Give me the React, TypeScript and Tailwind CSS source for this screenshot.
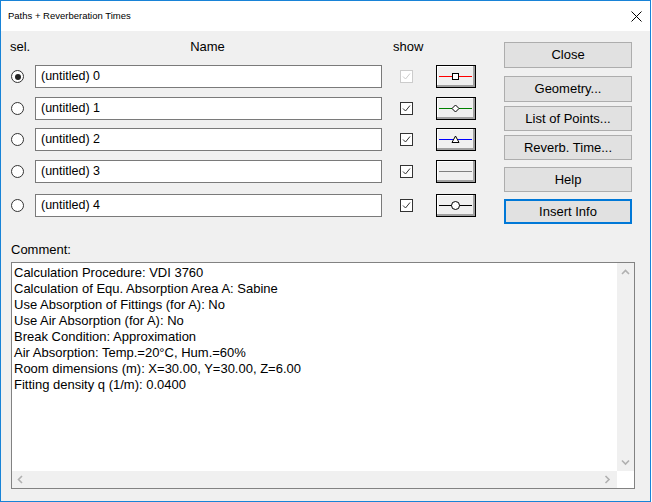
import React from 'react';

// rows of the path table; top margin keeps the uneven spacing of the dialog
const PATHS = [
    { name: '(untitled) 0', mt: 'mt-[10px]', color: '#ff0000', marker: 'square', enabled: false },
    { name: '(untitled) 1', mt: 'mt-[9px]', color: '#008000', marker: 'diamond', enabled: true },
    { name: '(untitled) 2', mt: 'mt-[8px]', color: '#0000ff', marker: 'triangle', enabled: true },
    { name: '(untitled) 3', mt: 'mt-[9px]', color: '#808080', marker: 'none', enabled: true },
    { name: '(untitled) 4', mt: 'mt-[11px]', color: '#000000', marker: 'circle', enabled: true },
];

const BUTTONS = [
    { label: 'Close', cls: 'mt-0 h-[26px]' },
    { label: 'Geometry...', cls: 'mt-[8px] h-[26px]' },
    { label: 'List of Points...', cls: 'mt-[4px] h-[25px]' },
    { label: 'Reverb. Time...', cls: 'mt-[4px] h-[25px]' },
    { label: 'Help', cls: 'mt-[7px] h-[25px]' },
];

const COMMENT = [
    'Calculation Procedure: VDI 3760',
    'Calculation of Equ. Absorption Area A: Sabine',
    'Use Absorption of Fittings (for A): No',
    'Use Air Absorption (for A): No',
    'Break Condition: Approximation',
    'Air Absorption: Temp.=20°C, Hum.=60%',
    'Room dimensions (m): X=30.00, Y=30.00, Z=6.00',
    'Fitting density q (1/m): 0.0400',
];

function Radio({ checked }: { checked: boolean }) {
    return (
        <div className="w-[13px] h-[13px] rounded-full border border-[#333] bg-white flex items-center justify-center">
            {checked && <div className="w-[6px] h-[6px] rounded-full bg-[#222]" />}
        </div>
    );
}

function Check({ enabled }: { enabled: boolean }) {
    const c = enabled ? '#333' : '#cccccc';
    return (
        <svg width="13" height="13" viewBox="0 0 13 13">
            <rect x="0.5" y="0.5" width="12" height="12" fill="#fff" stroke={c} />
            <polyline points="3,6.5 5.5,9 10,3.5" fill="none" stroke={c} strokeWidth="1" />
        </svg>
    );
}

function LineStyle({ color, marker }: { color: string; marker: string }) {
    return (
        <div className="w-[40px] h-[23px] border border-black bg-[#f0f0f0] shadow-[inset_-2px_-2px_0_#a0a0a0,inset_1px_1px_0_#ffffff]">
            <svg width="38" height="21" viewBox="0 0 38 21">
                <line x1="2" y1="10.5" x2="35" y2="10.5" stroke={color} strokeWidth="1" />
                {marker === 'square' && <rect x="15.5" y="7.5" width="6" height="6" fill="#fff" stroke="#000" />}
                {marker === 'diamond' && <polygon points="18.5,7 22,10.5 18.5,14 15,10.5" fill="#fff" stroke="#000" />}
                {marker === 'triangle' && <polygon points="18.5,7 22,13.5 15,13.5" fill="#fff" stroke="#000" />}
                {marker === 'circle' && <circle cx="18.5" cy="10.5" r="4" fill="#fff" stroke="#000" />}
            </svg>
        </div>
    );
}

function Chevron({ dir }: { dir: 'up' | 'down' | 'left' | 'right' }) {
    const pts = {
        up: '1,5 4.5,1.5 8,5',
        down: '1,1.5 4.5,5 8,1.5',
        left: '5,1 1.5,4.5 5,8',
        right: '1.5,1 5,4.5 1.5,8',
    }[dir];
    const horiz = dir === 'up' || dir === 'down';
    return (
        <svg width={horiz ? 9 : 7} height={horiz ? 7 : 9}>
            <polyline points={pts} fill="none" stroke="#b0b0b0" strokeWidth="1.6" />
        </svg>
    );
}

export default function App() {
    return (
        <div className="w-[652px] h-[502px] bg-white font-['Liberation_Sans',Arial,sans-serif] text-black">
            <div className="w-[651px] h-[502px] border border-[#1883d7] bg-[#f0f0f0] flex flex-col">
                {/* title bar */}
                <div className="h-[30px] bg-white flex items-center justify-between pl-[7px] pr-[8px]">
                    <span className="text-[9.5px]">Paths + Reverberation Times</span>
                    <svg width="11" height="11" viewBox="0 0 11 11">
                        <path d="M0.5 0.5 L10.5 10.5 M10.5 0.5 L0.5 10.5" stroke="#000" strokeWidth="1" />
                    </svg>
                </div>

                <div className="flex">
                    {/* path table */}
                    <div className="flex flex-col pt-[8px] pl-[10px]">
                        <div className="flex h-[16px] text-[13px] leading-[16px]">
                            <span className="w-[24px] -ml-[1px]">sel.</span>
                            <span className="w-[347px] text-center">Name</span>
                            <span className="ml-[12px]">show</span>
                        </div>
                        {PATHS.map((p, i) => (
                            <div key={i} className={`flex items-center h-[23px] ${p.mt}`}>
                                <Radio checked={i === 0} />
                                <div className="ml-[11px] w-[347px] h-[23px] border border-[#7a7a7a] bg-white flex items-center pl-[5px] text-[12.5px]">
                                    {p.name}
                                </div>
                                <div className="ml-[18px]">
                                    <Check enabled={p.enabled} />
                                </div>
                                <div className="ml-[23px]">
                                    <LineStyle color={p.color} marker={p.marker} />
                                </div>
                            </div>
                        ))}
                    </div>

                    {/* command buttons */}
                    <div className="flex flex-col pt-[11px] ml-[28px] w-[128px] text-[13px]">
                        {BUTTONS.map(b => (
                            <button key={b.label} className={`${b.cls} w-full bg-[#e1e1e1] border border-[#adadad] flex items-center justify-center`}>
                                {b.label}
                            </button>
                        ))}
                        <button className="mt-[7px] h-[25px] w-full bg-[#e1e1e1] border-2 border-[#0078d7] flex items-center justify-center">
                            Insert Info
                        </button>
                    </div>
                </div>

                <div className="mt-[18px] ml-[10px] text-[13px] leading-[16px]">Comment:</div>

                {/* comment box */}
                <div className="mt-[4px] ml-[10px] w-[624px] h-[227px] border border-[#828282] bg-white flex flex-col">
                    <div className="flex flex-1">
                        <div className="flex-1 pl-[2px] pt-[2px] text-[13px] leading-[16px]">
                            {COMMENT.map((l, i) => (
                                <div key={i}>{l}</div>
                            ))}
                        </div>
                        <div className="w-[17px] bg-[#f0f0f0] flex flex-col items-center justify-between pt-[6px] pb-[5px]">
                            <Chevron dir="up" />
                            <Chevron dir="down" />
                        </div>
                    </div>
                    <div className="flex h-[17px]">
                        <div className="flex-1 bg-[#f0f0f0] flex items-center justify-between pl-[5px] pr-[6px]">
                            <Chevron dir="left" />
                            <Chevron dir="right" />
                        </div>
                        <div className="w-[17px] bg-white" />
                    </div>
                </div>
            </div>
        </div>
    );
}
